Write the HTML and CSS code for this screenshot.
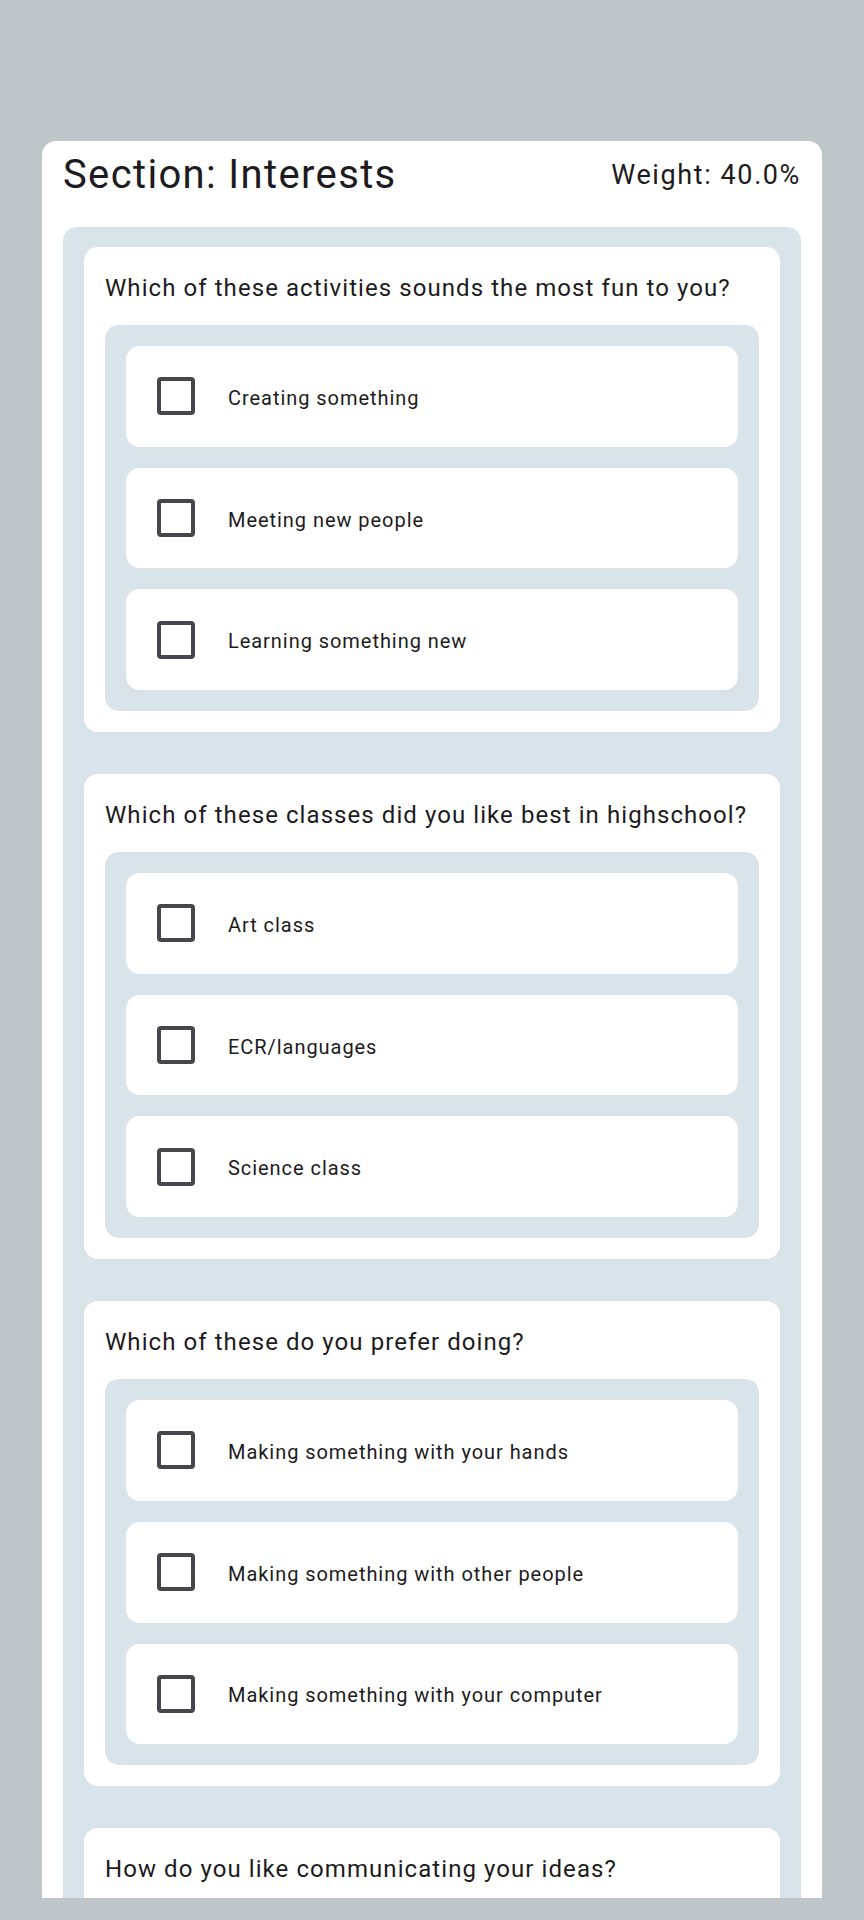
FILE: index.html
```html
<!DOCTYPE html>
<html>
<head>
<meta charset="utf-8">
<link rel="stylesheet" href="styles.css">
</head>
<body>
<div class="page">
  <div class="sheet">
    <div class="sheet-header">
      <h1 class="title">Section: Interests</h1>
      <span class="weight">Weight: 40.0%</span>
    </div>
    <div class="panel">
      <div class="question">
        <p class="q-text">Which of these activities sounds the most fun to you?</p>
        <div class="options">
          <label class="option"><span class="box"></span><span class="opt-text">Creating something</span></label>
          <label class="option"><span class="box"></span><span class="opt-text">Meeting new people</span></label>
          <label class="option"><span class="box"></span><span class="opt-text">Learning something new</span></label>
        </div>
      </div>
      <div class="question">
        <p class="q-text">Which of these classes did you like best in highschool?</p>
        <div class="options">
          <label class="option"><span class="box"></span><span class="opt-text">Art class</span></label>
          <label class="option"><span class="box"></span><span class="opt-text">ECR/languages</span></label>
          <label class="option"><span class="box"></span><span class="opt-text">Science class</span></label>
        </div>
      </div>
      <div class="question">
        <p class="q-text">Which of these do you prefer doing?</p>
        <div class="options">
          <label class="option"><span class="box"></span><span class="opt-text">Making something with your hands</span></label>
          <label class="option"><span class="box"></span><span class="opt-text">Making something with other people</span></label>
          <label class="option"><span class="box"></span><span class="opt-text">Making something with your computer</span></label>
        </div>
      </div>
      <div class="question">
        <p class="q-text">How do you like communicating your ideas?</p>
      </div>
    </div>
  </div>
</div>
</body>
</html>
```

FILE: styles.css
```css
* { box-sizing: border-box; }
html, body {
  margin: 0;
  padding: 0;
  background: #bec6c9;
  font-family: Roboto, "Noto Sans", sans-serif;
  color: #1d1b20;
}
.page {
  padding: 141px 42px 0;
  height: 1920px;
}
.sheet {
  background: #ffffff;
  border-radius: 14px 14px 0 0;
  height: 1757px;
  overflow: hidden;
  padding: 0 21px;
}
.sheet-header {
  display: flex;
  justify-content: space-between;
  align-items: center;
  padding-top: 10px;
  margin-bottom: 28px;
  height: 58px;
}
.title {
  margin: 0;
  font-weight: 400;
  font-size: 40px;
  line-height: 48px;
  letter-spacing: 1.35px;
}
.weight {
  font-size: 27px;
  line-height: 48px;
  letter-spacing: 1.6px;
}
.panel {
  background: #d9e3ea;
  border-radius: 14px;
  padding: 20px 21px 21px;
  display: flex;
  flex-direction: column;
  gap: 42px;
}
.question {
  background: #ffffff;
  border-radius: 14px;
  padding: 25px 21px 21px;
}
.q-text {
  margin: 0 0 21px;
  font-size: 24px;
  line-height: 32px;
  letter-spacing: 1.07px;
}
.options {
  background: #d9e3ea;
  border-radius: 14px;
  padding: 21px;
  display: flex;
  flex-direction: column;
  gap: 21px;
}
.option {
  background: #ffffff;
  border-radius: 14px;
  height: 100.7px;
  display: flex;
  align-items: center;
  padding-left: 31px;
}
.box {
  width: 38px;
  height: 38px;
  border: 4px solid #49454f;
  border-radius: 4px;
  flex: none;
}
.opt-text {
  margin-left: 33px;
  margin-top: 3px;
  font-size: 20px;
  line-height: 28px;
  letter-spacing: 0.95px;
}
```
